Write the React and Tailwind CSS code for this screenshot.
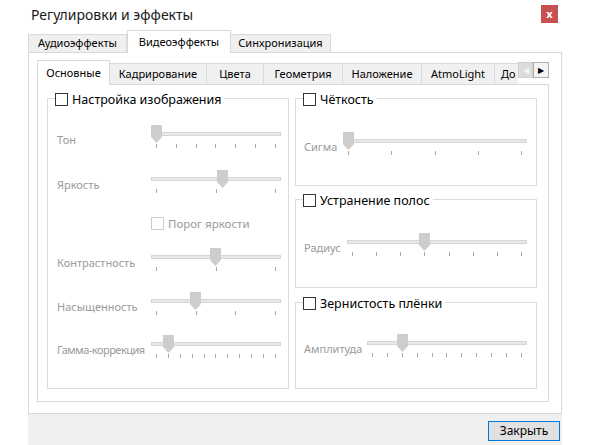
import React from "react";

const Thumb = () => (
  <svg width="11" height="18" viewBox="0 0 11 18" className="block">
    <polygon points="0,0 11,0 11,12 5.5,18 0,12" fill="#cdcdcd" />
  </svg>
);

function Slider({ w, ticks, offset }) {
  return (
    <div className={`relative h-[24px] ${w}`}>
      <div className="mt-[7px] h-[4px] bg-[#e8e8e8] border border-[#d6d6d6]" />
      <div className="absolute top-0" style={{ left: offset }}>
        <Thumb />
      </div>
      <div className="mt-[8px] px-[5px] flex justify-between">
        {Array.from({ length: ticks }).map((_, i) => (
          <span key={i} className="block w-px h-[4px] bg-[#a8a8a8]" />
        ))}
      </div>
    </div>
  );
}

function Legend({ children }) {
  return (
    <div className="-mt-[6px] ml-[7px] w-fit h-[13px] bg-white pr-[3px] flex items-center gap-[4px]">
      <span className="block w-[13px] h-[13px] border border-[#333333] bg-white" />
      <span className="leading-[13px] text-[12.5px] text-black">{children}</span>
    </div>
  );
}

function Row({ label, lw, mt, sw, ticks, offset, pl, tight = "" }) {
  return (
    <div className={`flex ${mt} ${pl}`}>
      <div className={`${lw} ${tight} pt-[7px] leading-[16px] text-[11px] whitespace-nowrap text-[#9a9a9a]`}>{label}</div>
      <Slider w={sw} ticks={ticks} offset={offset} />
    </div>
  );
}

const tabOff =
  "h-[21px] bg-[#f0f0f0] border border-b-0 border-l-0 border-[#d9d9d9] flex items-center justify-center";

export default function App() {
  return (
    <div className="w-[591px] h-[445px] bg-white flex flex-col text-[11px] text-black overflow-hidden font-['Noto_Sans',sans-serif]">
      {/* title bar */}
      <div className="h-[28px] flex items-center pl-[31px] pr-[33px]">
        <span className="flex-1 text-[14px] text-[#1a1a1a]">Регулировки и эффекты</span>
        <div className="w-[17px] h-[18px] bg-[#c75050] text-white flex items-center justify-center text-[11px] font-bold leading-none pb-[2px]">
          x
        </div>
      </div>

      {/* outer tabs */}
      <div className="ml-[28px] h-[24px] flex items-end">
        <div className="w-[99px] h-[18px] bg-[#f0f0f0] border border-b-0 border-[#d9d9d9] flex items-center justify-center">
          Аудиоэффекты
        </div>
        <div className="relative z-10 -mb-px w-[104px] h-[23px] bg-white border border-b-0 border-[#d9d9d9] flex items-start pt-[3px] justify-center">
          Видеоэффекты
        </div>
        <div className="w-[100px] h-[18px] bg-[#f0f0f0] border border-b-0 border-l-0 border-[#d9d9d9] flex items-center justify-center">
          Синхронизация
        </div>
      </div>

      {/* outer panel */}
      <div className="ml-[28px] w-[534px] h-[362px] border border-[#d9d9d9] bg-white pl-[8px] pt-[7px]">
        {/* inner tabs */}
        <div className="h-[24px] flex items-end">
          <div className="relative z-10 -mb-px w-[73px] h-[25px] bg-white border border-b-0 border-[#d9d9d9] flex items-start pt-[4px] justify-center">
            Основные
          </div>
          <div className={`w-[97px] ${tabOff}`}>Кадрирование</div>
          <div className={`w-[57px] ${tabOff}`}>Цвета</div>
          <div className={`w-[79px] ${tabOff}`}>Геометрия</div>
          <div className={`w-[79px] ${tabOff}`}>Наложение</div>
          <div className={`w-[73px] ${tabOff}`}>AtmoLight</div>
          <div className="w-[23px] h-[21px] bg-[#f0f0f0] border-t border-[#d9d9d9] flex items-center pl-[6px] whitespace-nowrap">
            До
          </div>
          <div className="self-start mt-[2px] flex">
            <div className="w-[15px] h-[16px] bg-[#dcdcdc] border border-[#cfcfcf] flex items-center justify-center text-[8px] text-[#f4f4f4]">
              ◀
            </div>
            <div className="w-[16px] h-[16px] bg-[#f4f4f4] border border-[#adadad] flex items-center justify-center text-[8px] text-black">
              ▶
            </div>
          </div>
        </div>

        {/* inner panel */}
        <div className="w-[512px] h-[318px] border border-[#d9d9d9] flex pt-[13px] pl-[9px] gap-[6px]">
          {/* left group */}
          <div className="w-[242px] h-[291px] border border-[#dcdcdc]">
            <Legend>Настройка изображения</Legend>
            <Row label="Тон" lw="w-[94px]" mt="mt-[19px]" pl="pl-[9px]" sw="w-[130px]" ticks={7} offset={0} />
            <Row label="Яркость" lw="w-[94px]" mt="mt-[21px]" pl="pl-[9px]" sw="w-[130px]" ticks={3} offset={66} />
            <div className="mt-[23px] pl-[103px] flex items-center gap-[4px]">
              <span className="block w-[13px] h-[13px] border border-[#cccccc] bg-white" />
              <span className="leading-[13px] text-[11.5px] text-[#9a9a9a]">Порог яркости</span>
            </div>
            <Row label="Контрастность" lw="w-[94px]" mt="mt-[18px]" pl="pl-[9px]" sw="w-[130px]" ticks={3} offset={59} />
            <Row label="Насыщенность" lw="w-[94px]" mt="mt-[20px]" pl="pl-[9px]" sw="w-[130px]" ticks={4} offset={39} />
            <Row label="Гамма-коррекция" lw="w-[94px]" tight="tracking-[-0.5px]" mt="mt-[19px]" pl="pl-[9px]" sw="w-[130px]" ticks={11} offset={12} />
          </div>

          {/* right column */}
          <div className="w-[242px] flex flex-col">
            <div className="h-[88px] border border-[#dcdcdc]">
              <Legend>Чёткость</Legend>
              <Row label="Сигма" lw="w-[39px]" mt="mt-[26px]" pl="pl-[8px]" sw="w-[184px]" ticks={5} offset={0} />
            </div>
            <div className="mt-[13px] h-[89px] border border-[#dcdcdc]">
              <Legend>Устранение полос</Legend>
              <Row label="Радиус" lw="w-[43px]" mt="mt-[26px]" pl="pl-[8px]" sw="w-[180px]" ticks={8} offset={72} />
            </div>
            <div className="mt-[14px] h-[87px] border border-[#dcdcdc]">
              <Legend>Зернистость плёнки</Legend>
              <Row label="Амплитуда" lw="w-[63px]" mt="mt-[24px]" pl="pl-[8px]" sw="w-[160px]" ticks={11} offset={30} />
            </div>
          </div>
        </div>
      </div>

      {/* bottom band */}
      <div className="ml-[28px] w-[534px] flex-1 bg-[#f0f0f0] flex justify-end items-start pt-[7px] pr-[2px]">
        <div className="w-[72px] h-[20px] bg-[#e1e1e1] border border-[#0078d7] flex items-center justify-center text-[12px]">
          Закрыть
        </div>
      </div>
    </div>
  );
}
